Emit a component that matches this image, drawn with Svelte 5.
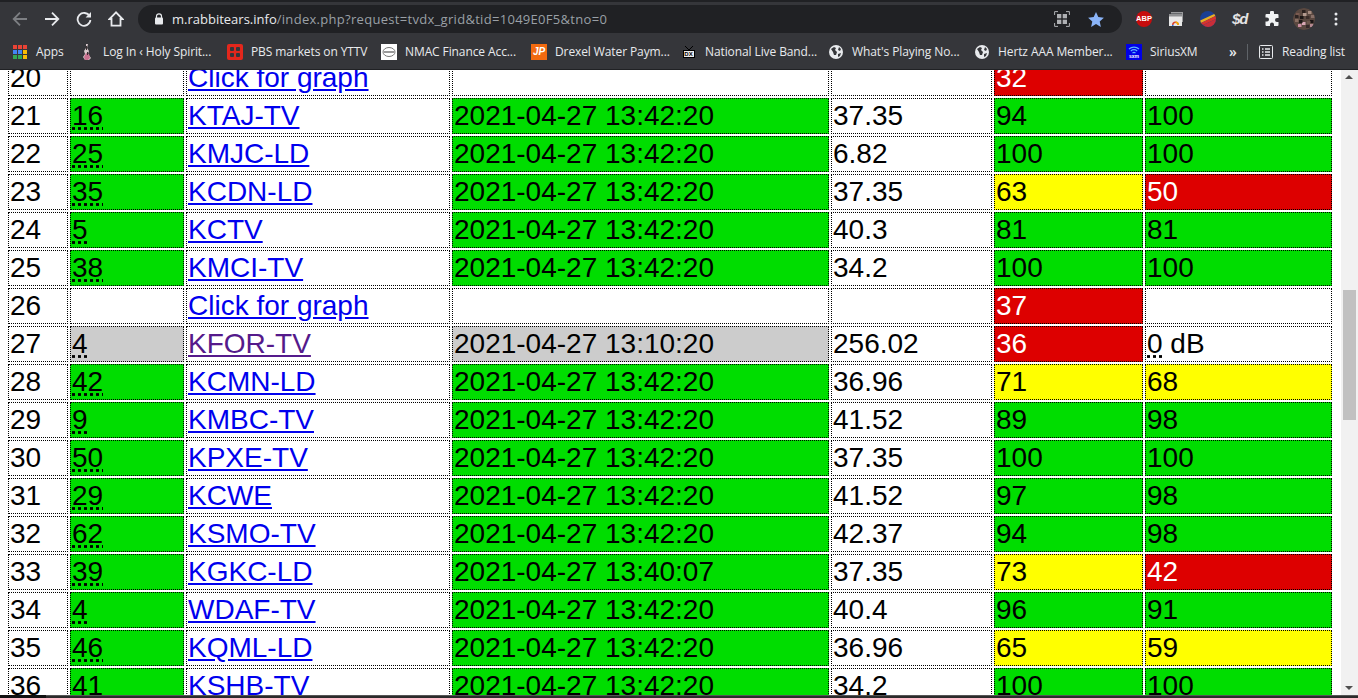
<script>
	const G = 'green';
	const R = 'red';
	const Y = 'yellow';

	const rows = [
		{ no: 20, rf: '', call: 'Click for graph', time: '', erp: '', sig: [32, R], snr: ['', ''] },
		{ no: 21, rf: 16, call: 'KTAJ-TV', time: '2021-04-27 13:42:20', erp: '37.35', sig: [94, G], snr: [100, G] },
		{ no: 22, rf: 25, call: 'KMJC-LD', time: '2021-04-27 13:42:20', erp: '6.82', sig: [100, G], snr: [100, G] },
		{ no: 23, rf: 35, call: 'KCDN-LD', time: '2021-04-27 13:42:20', erp: '37.35', sig: [63, Y], snr: [50, R] },
		{ no: 24, rf: 5, call: 'KCTV', time: '2021-04-27 13:42:20', erp: '40.3', sig: [81, G], snr: [81, G] },
		{ no: 25, rf: 38, call: 'KMCI-TV', time: '2021-04-27 13:42:20', erp: '34.2', sig: [100, G], snr: [100, G] },
		{ no: 26, rf: '', call: 'Click for graph', time: '', erp: '', sig: [37, R], snr: ['', ''] },
		{ no: 27, rf: 4, stale: true, visited: true, call: 'KFOR-TV', time: '2021-04-27 13:10:20', erp: '256.02', sig: [36, R], snr: [0, 'db'] },
		{ no: 28, rf: 42, call: 'KCMN-LD', time: '2021-04-27 13:42:20', erp: '36.96', sig: [71, Y], snr: [68, Y] },
		{ no: 29, rf: 9, call: 'KMBC-TV', time: '2021-04-27 13:42:20', erp: '41.52', sig: [89, G], snr: [98, G] },
		{ no: 30, rf: 50, call: 'KPXE-TV', time: '2021-04-27 13:42:20', erp: '37.35', sig: [100, G], snr: [100, G] },
		{ no: 31, rf: 29, call: 'KCWE', time: '2021-04-27 13:42:20', erp: '41.52', sig: [97, G], snr: [98, G] },
		{ no: 32, rf: 62, call: 'KSMO-TV', time: '2021-04-27 13:42:20', erp: '42.37', sig: [94, G], snr: [98, G] },
		{ no: 33, rf: 39, call: 'KGKC-LD', time: '2021-04-27 13:40:07', erp: '37.35', sig: [73, Y], snr: [42, R] },
		{ no: 34, rf: 4, call: 'WDAF-TV', time: '2021-04-27 13:42:20', erp: '40.4', sig: [96, G], snr: [91, G] },
		{ no: 35, rf: 46, call: 'KQML-LD', time: '2021-04-27 13:42:20', erp: '36.96', sig: [65, Y], snr: [59, Y] },
		{ no: 36, rf: 41, call: 'KSHB-TV', time: '2021-04-27 13:42:20', erp: '34.2', sig: [100, G], snr: [100, G] }
	];

	const bookmarks = [
		{ icon: 'apps', label: 'Apps', width: 67 },
		{ icon: 'holy', label: 'Log In ‹ Holy Spirit...', width: 147 },
		{ icon: 'pbs', label: 'PBS markets on YTTV', width: 154 },
		{ icon: 'nmac', label: 'NMAC Finance Acc...', width: 150 },
		{ icon: 'jp', label: 'Drexel Water Paym...', width: 151 },
		{ icon: 'dx', label: 'National Live Band...', width: 147 },
		{ icon: 'globe', label: "What's Playing No...", width: 146 },
		{ icon: 'globe', label: 'Hertz AAA Member...', width: 151 },
		{ icon: 'sirius', label: 'SiriusXM', width: 103 }
	];

	const avatarDots = [
		[3, 5, '#7a5a50'], [9, 2, '#2b211e'], [15, 3, '#a58b7f'], [7, 8, '#1b1615'],
		[13, 8, '#3a2d29'], [2, 11, '#8a6f63'], [9, 14, '#d8a7b4'], [17, 12, '#191415'],
		[5, 16, '#c98ca0'], [13, 17, '#35292a'], [18, 7, '#887068'], [10, 5, '#b39a8e'],
		[6, 12, '#1f1918'], [14, 13, '#6d574d'], [2, 7, '#2d2422'], [17, 16, '#b58a92']
	];
</script>

<div class="screen">
	<header class="toolbar">
		<div class="nav">
			<svg class="back" width="16" height="16" viewBox="0 0 16 16"><path d="M15 8H2M8 1.700 1.700 8 8 14.300" /></svg>
			<svg width="16" height="16" viewBox="0 0 16 16"><path d="M1 8h13M8 1.700 14.300 8 8 14.300" /></svg>
			<svg width="16" height="16" viewBox="0 0 16 16"><path d="M13.600 5.200A6.400 6.400 0 1 0 14.400 9" /><path class="solid" d="M15 1v5.400H9.600z" /></svg>
			<svg width="16" height="16" viewBox="0 0 16 16"><path d="M8 1.300 1.500 8h2v6.700h9V8h2z" /></svg>
		</div>
		<div class="omnibox">
			<svg class="lock" width="10" height="12" viewBox="0 0 10 12"><path d="M2.500 5V3.300a2.500 2.500 0 0 1 5 0V5" fill="none" stroke="#e8eaed" stroke-width="1.200" /><rect x="1" y="4.500" width="8" height="7" rx="1" fill="#e8eaed" /></svg>
			<span class="url"><b>m.rabbitears.info</b>/index.php?request=tvdx_grid&amp;tid=1049E0F5&amp;tno=0</span>
			<svg class="qr" width="16" height="16" viewBox="0 0 16 16">
				<path d="M.6 4V.6H4M12 .6h3.400V4M15.400 12v3.400H12M4 15.400H.6V12" fill="none" stroke="#aeb0b3" />
				<rect x="3" y="3" width="4.300" height="4.300" fill="#aeb0b3" /><rect x="8.700" y="3" width="4.300" height="4.300" fill="#aeb0b3" />
				<rect x="3" y="8.700" width="4.300" height="4.300" fill="#aeb0b3" /><rect x="8.700" y="8.700" width="4.300" height="4.300" fill="#aeb0b3" />
			</svg>
			<svg class="star" width="16" height="15" viewBox="0 0 16 15"><path d="M8 0l2.300 5.100 5.600.6-4.200 3.700 1.200 5.500L8 12.100l-4.900 2.800 1.200-5.500L.1 5.700l5.600-.6z" fill="#8ab4f8" /></svg>
		</div>
		<div class="extensions">
			<span class="abp">ABP</span>
			<svg width="16" height="16" viewBox="0 0 16 16">
				<path d="M3 1h12v10h-1V2.500H3z" fill="#9a9b9d" />
				<rect x="1" y="3" width="13" height="12" fill="#e8e8e8" />
				<rect x="1" y="3" width="13" height="2.500" fill="#8f9092" />
				<path d="M4 14a3.500 3.500 0 0 1 7 0H9.500a2 2 0 0 0-4 0z" fill="#d8412f" />
				<path d="M7.500 10.500a3.500 3.500 0 0 1 3.500 3.500H9.500a2 2 0 0 0-2-2z" fill="#f4b400" />
				<path d="M4 14h1.500v1H4z" fill="#1a73e8" />
			</svg>
			<svg width="16" height="16" viewBox="0 0 16 16">
				<circle cx="8" cy="8" r="8" fill="#1b3f94" />
				<path d="M.2 9.500 14.200 3a8 8 0 0 1 1.200 2L1 12z" fill="#e8b022" />
				<path d="M1 12 15.400 5a8 8 0 0 1 .6 3L3 14z" fill="#d8342c" />
				<path d="M3 14 16 8a8 8 0 0 1-8 8 8 8 0 0 1-5-2z" fill="#c92d38" />
			</svg>
			<span class="sd">$d</span>
			<svg width="16" height="16" viewBox="0 0 16 16"><path d="M6 1.500a2 2 0 0 1 4 0V3h3.500a1 1 0 0 1 1 1v3H13a2 2 0 0 0 0 4h1.500v3a1 1 0 0 1-1 1H10v-1.500a2 2 0 0 0-4 0V15H2.500a1 1 0 0 1-1-1v-3.500H3a2 2 0 0 0 0-4H1.500V4a1 1 0 0 1 1-1H6z" fill="#f1f3f4" /></svg>
			<svg class="avatar" width="22" height="22" viewBox="0 0 22 22">
				<circle cx="11" cy="11" r="11" fill="#5a4840" />
				{#each avatarDots as [x, y, color]}
					<rect {x} {y} width="3.500" height="3" fill={color} />
				{/each}
			</svg>
			<svg class="kebab" width="4" height="14" viewBox="0 0 4 14"><circle cx="2" cy="2" r="1.500" /><circle cx="2" cy="7" r="1.500" /><circle cx="2" cy="12" r="1.500" /></svg>
		</div>
	</header>

	<nav class="bookmarks">
		{#each bookmarks as b}
			<div class="bookmark" style="width: {b.width}px">
				<span class="icon">
					{#if b.icon === 'apps'}
						<svg width="14" height="14" viewBox="0 0 14 14">
							{#each ['#ea4335', '#ea4335', '#ea4335', '#4285f4', '#4285f4', '#fbbc04', '#34a853', '#34a853', '#fbbc04'] as color, i}
								<rect x={(i % 3) * 5} y={Math.floor(i / 3) * 5} width="4" height="4" fill={color} />
							{/each}
						</svg>
					{:else if b.icon === 'holy'}
						<svg width="14" height="16" viewBox="0 0 14 16">
							<path d="M6 0h2l-1 4 2 3-1 3 3 4-2 2H5l-2-3 2-3-1-3 2-3z" fill="#d9c9cc" />
							<path d="M6 9l3 1 1 4-2 2H5l-1-3z" fill="#c9718f" />
							<path d="M6 2h1v4H6zM7 8h1v3H7z" fill="#3a3032" />
						</svg>
					{:else if b.icon === 'pbs'}
						<svg width="16" height="16" viewBox="0 0 16 16">
							<rect width="16" height="16" rx="2" fill="#e3271c" />
							<rect x="3" y="3" width="4" height="4" rx="1" fill="#35363a" /><rect x="9" y="3" width="4" height="4" rx="1" fill="#35363a" />
							<rect x="3" y="9" width="4" height="4" rx="1" fill="#35363a" /><rect x="9" y="9" width="4" height="4" rx="1" fill="#35363a" />
						</svg>
					{:else if b.icon === 'nmac'}
						<svg width="16" height="16" viewBox="0 0 16 16">
							<rect width="16" height="16" fill="#fff" />
							<ellipse cx="8" cy="8" rx="6" ry="4.500" fill="none" stroke="#777" />
							<path d="M3 8h10" stroke="#777" stroke-width="1.500" />
						</svg>
					{:else if b.icon === 'jp'}
						<span class="jp">JP</span>
					{:else if b.icon === 'dx'}
						<span class="dx">
							<svg width="12" height="4" viewBox="0 0 12 4"><path d="M2 0l4 4 4-4" fill="none" stroke="#000" /></svg>
							<span>DX</span>
						</span>
					{:else if b.icon === 'globe'}
						<svg width="14" height="14" viewBox="0 0 14 14">
							<circle cx="7" cy="7" r="7" fill="#e8eaed" />
							<path d="M2 4l3-2 2 1-1 2 2 2-1 3H5L4 7zM10 2l2 2-1 2-2-1zM9 9l3-1-1 3-2 1z" fill="#35363a" />
						</svg>
					{:else if b.icon === 'sirius'}
						<span class="sirius">
							<svg width="12" height="8" viewBox="0 0 12 8" fill="none" stroke="#5ab4ff" stroke-width="1.100"><path d="M1 3a7.500 7.500 0 0 1 10 0M2.800 5a5 5 0 0 1 6.400 0M4.500 7a2.500 2.500 0 0 1 3 0" /></svg>
							<span>sxm</span>
						</span>
					{/if}
				</span>
				<span class="label">{b.label}</span>
			</div>
		{/each}
		<span class="more">»</span>
		<span class="divider"></span>
		<div class="reading">
			<svg width="14" height="14" viewBox="0 0 14 14" fill="none" stroke="#e8eaed"><rect x=".5" y=".5" width="13" height="13" rx="1" /><path d="M3 4h1.500M6 4h5M3 7h1.500M6 7h5M3 10h1.500M6 10h5" stroke-width="1.300" /></svg>
			<span class="label">Reading list</span>
		</div>
	</nav>

	<div class="viewport">
		<main class="page">
			<table>
				<tbody>
					{#each rows as row}
						<tr>
							<td class="c-no">{row.no}</td>
							<td class="c-rf" class:green={row.rf && !row.stale} class:stale={row.stale}>
								{#if row.rf}<abbr title="RF channel">{row.rf}</abbr>{/if}
							</td>
							<td class="c-call"><a href="#top" class:visited={row.visited} onclick={(e) => e.preventDefault()}>{row.call}</a></td>
							<td class="c-time" class:green={row.time && !row.stale} class:stale={row.stale}>{row.time}</td>
							<td class="c-erp">{row.erp}</td>
							<td class="c-sig {row.sig[1]}">{row.sig[0]}</td>
							{#if row.snr[1] === 'db'}
								<td class="c-snr"><abbr title="Signal quality">{row.snr[0]}</abbr> dB</td>
							{:else}
								<td class="c-snr {row.snr[1]}">{row.snr[0]}</td>
							{/if}
						</tr>
					{/each}
				</tbody>
			</table>
		</main>
		<aside class="scrollbar">
			<span class="arrow up"></span>
			<span class="thumb"></span>
			<span class="arrow down"></span>
		</aside>
	</div>

	<footer class="taskbar">
		<span class="start"></span>
		<span class="strip"></span>
	</footer>
</div>

<style>
	:global(body) {
		margin: 0;
		overflow: hidden;
	}

	.screen {
		display: flex;
		flex-direction: column;
		height: 698px;
		width: 1358px;
		overflow: hidden;
		background: #fff;
		font-family: 'Open Sans', 'Noto Sans', sans-serif;
	}

	.toolbar {
		display: flex;
		align-items: center;
		box-sizing: border-box;
		height: 36px;
		padding: 3px 0 3px 12px;
		background: #35363a;
		border-top: 2px solid #202124;
	}

	.nav {
		display: flex;
		gap: 16px;
		width: 126px;
		flex: none;
	}

	.nav svg {
		fill: none;
		stroke: #e8eaed;
		stroke-width: 1.800;
	}

	.nav .back {
		stroke: #7d7f83;
	}

	.nav .solid {
		fill: #e8eaed;
		stroke: none;
	}

	.omnibox {
		display: flex;
		align-items: center;
		box-sizing: border-box;
		width: 984px;
		height: 28px;
		flex: none;
		padding: 0 18px 0 16px;
		border-radius: 14px;
		background: #202124;
	}

	.lock {
		flex: none;
		margin-right: 8px;
	}

	.url {
		flex: 1;
		font-size: 13px;
		letter-spacing: 0.3px;
		color: #9aa0a6;
		white-space: nowrap;
		font-weight: 400;
	}

	.url b {
		font-weight: 400;
		letter-spacing: 0;
		color: #e8eaed;
	}

	.qr {
		margin-right: 18px;
	}

	.extensions {
		display: flex;
		align-items: center;
		gap: 16px;
		margin-left: 14px;
	}

	.abp {
		display: block;
		width: 16px;
		height: 16px;
		border-radius: 50%;
		background: #c70d0d;
		color: #fff;
		font: bold 7.500px/16px 'Liberation Sans', sans-serif;
		text-align: center;
	}

	.sd {
		display: block;
		width: 16px;
		font: italic bold 15px/16px 'Liberation Sans', sans-serif;
		color: #e4e4e4;
		letter-spacing: -1px;
	}

	.avatar {
		margin-left: -3px;
		border-radius: 50%;
	}

	.kebab {
		fill: #e8eaed;
		margin-left: 3px;
	}

	.bookmarks {
		display: flex;
		align-items: center;
		box-sizing: border-box;
		height: 34px;
		padding: 0 0 2px 13px;
		background: #35363a;
		border-bottom: 1px solid #202124;
	}

	.bookmark {
		display: flex;
		align-items: center;
		gap: 8px;
		flex: none;
	}

	.icon {
		display: flex;
		align-items: center;
		flex: none;
		min-width: 15px;
	}

	.label {
		font-size: 12px;
		color: #e8eaed;
		white-space: nowrap;
		letter-spacing: -0.1px;
	}

	.jp {
		display: block;
		width: 16px;
		height: 16px;
		background: #f26a0f;
		color: #fff;
		font: italic bold 10px/16px 'Liberation Sans', sans-serif;
		text-align: center;
	}

	.dx {
		display: flex;
		flex-direction: column;
		align-items: center;
		width: 13px;
	}

	.dx span {
		display: block;
		width: 12px;
		height: 8px;
		background: #eee;
		border: 1px solid #000;
		box-sizing: border-box;
		color: #000;
		font: bold 6px/6px 'Liberation Sans', sans-serif;
		text-align: center;
	}

	.sirius {
		display: flex;
		flex-direction: column;
		align-items: center;
		width: 16px;
		height: 16px;
		background: #0000e6;
		padding-top: 2px;
		box-sizing: border-box;
	}

	.sirius span {
		color: #fff;
		font: bold 5px/5px 'Liberation Sans', sans-serif;
	}

	.more {
		width: 18px;
		font-size: 14px;
		font-weight: 600;
		line-height: 14px;
		color: #e8eaed;
	}

	.divider {
		width: 1px;
		height: 16px;
		margin-right: 11px;
		background: #5f6368;
	}

	.reading {
		display: flex;
		align-items: center;
		gap: 9px;
	}

	.viewport {
		display: flex;
		flex: 1;
		min-height: 0;
		overflow: hidden;
	}

	.page {
		flex: 1;
		min-width: 0;
		overflow: hidden;
	}

	table {
		width: 1328px;
		margin: -12px 0 0 6px;
		table-layout: fixed;
		border-collapse: separate;
		border-spacing: 2px;
		font-family: 'Liberation Sans', Arial, sans-serif;
		font-size: 28px;
		color: #000;
	}

	td {
		box-sizing: border-box;
		height: 36px;
		padding: 1px;
		border: 1px dotted #000;
		line-height: 32px;
		white-space: nowrap;
		overflow: hidden;
	}

	.c-no { width: 60px; }
	.c-rf { width: 114px; }
	.c-call { width: 264px; }
	.c-time { width: 377px; }
	.c-erp { width: 161px; }
	.c-sig { width: 149px; }

	abbr {
		text-decoration: underline dotted;
	}

	a {
		color: #0000ee;
		text-decoration: underline;
	}

	a.visited {
		color: #551a8b;
	}

	.green {
		background: #00dd00;
	}

	.red {
		background: #dd0000;
		color: #fff;
	}

	.yellow {
		background: #ffff00;
	}

	.stale {
		background: #cccccc;
	}

	.scrollbar {
		position: relative;
		flex: none;
		width: 17px;
		background: #f1f1f1;
	}

	.thumb {
		position: absolute;
		top: 220px;
		left: 2px;
		width: 13px;
		height: 130px;
		background: #c1c1c1;
	}

	.arrow {
		position: absolute;
		left: 4px;
		width: 0;
		height: 0;
		border-left: 4px solid transparent;
		border-right: 4px solid transparent;
	}

	.arrow.up {
		top: 5px;
		border-bottom: 4px solid #505050;
	}

	.arrow.down {
		bottom: 5px;
		border-top: 4px solid #505050;
	}

	.taskbar {
		display: flex;
		flex: none;
		height: 3px;
		background: #2b2b2b;
	}

	.start {
		width: 46px;
		background: #111;
	}

	.strip {
		flex: 1;
		border-top: 1px solid #555;
	}
</style>
